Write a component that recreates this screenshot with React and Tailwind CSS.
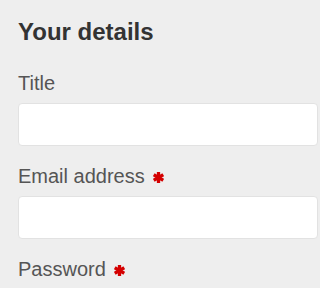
import React from "react";

function Req() {
  return (
    <svg className="ml-[8px] inline-block align-baseline" width="11" height="11" viewBox="0 0 10 10">
      <g stroke="#d40000" strokeWidth="3" strokeLinecap="butt">
        <line x1="5" y1="0" x2="5" y2="10" />
        <line x1="0.7" y1="2.5" x2="9.3" y2="7.5" />
        <line x1="0.7" y1="7.5" x2="9.3" y2="2.5" />
      </g>
    </svg>
  );
}

function Field({ label, required, mb }) {
  return (
    <div className={mb}>
      <label className="block text-[20px] leading-[28px] text-[#555555]">
        {label}
        {required && <Req />}
      </label>
      <div className="mt-[6px] h-[43px] w-[300px] rounded-[4px] border border-[#e2e2e2] bg-white" />
    </div>
  );
}

export default function App() {
  return (
    <div
      className="h-[288px] w-full overflow-hidden bg-[#eeeeee] pl-[18px] pt-[18px]"
      style={{ fontFamily: '"Liberation Sans", Arial, sans-serif' }}
    >
      <h2 className="text-[24px] font-bold leading-[28px] text-[#333333]">Your details</h2>
      <div className="mt-[23px]">
        <Field label="Title" mb="mb-[16px]" />
        <Field label="Email address" required mb="mb-[16px]" />
        <Field label="Password" required />
      </div>
    </div>
  );
}
